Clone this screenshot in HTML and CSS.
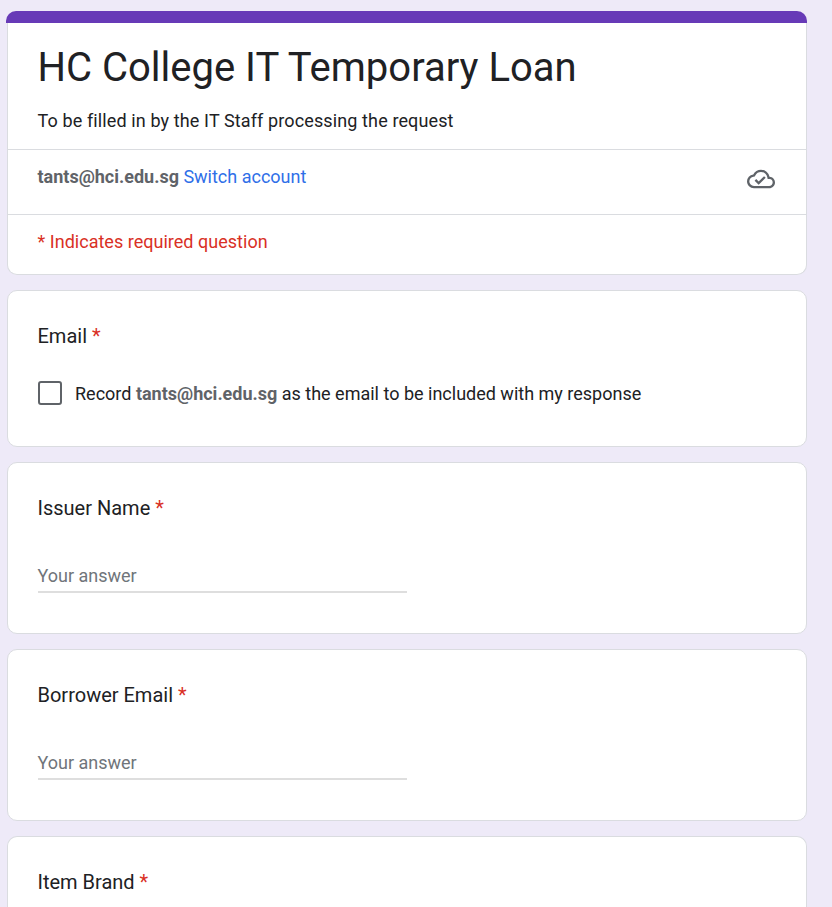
FILE: index.html
```html
<!DOCTYPE html>
<html lang="en">
<head>
<meta charset="utf-8">
<title>HC College IT Temporary Loan</title>
<link rel="stylesheet" href="styles.css">
</head>
<body>
<main class="form">
  <header class="card header">
    <div class="accent"></div>
    <div class="intro">
      <h1>HC College IT Temporary Loan</h1>
      <p class="description">To be filled in by the IT Staff processing the request</p>
    </div>
    <div class="account">
      <p><b>tants@hci.edu.sg</b> <a class="switch">Switch account</a></p>
      <svg class="cloud" viewBox="0 0 24 24" aria-hidden="true"><path d="M19.35 10.04A7.49 7.49 0 0 0 12 4C9.11 4 6.6 5.64 5.35 8.04A5.994 5.994 0 0 0 0 14c0 3.31 2.69 6 6 6h13c2.76 0 5-2.24 5-5 0-2.64-2.05-4.78-4.65-4.96zM19 18H6c-2.21 0-4-1.79-4-4 0-2.05 1.53-3.76 3.56-3.97l1.07-.11.5-.95A5.469 5.469 0 0 1 12 6c2.62 0 4.88 1.86 5.39 4.43l.3 1.5 1.53.11A2.98 2.98 0 0 1 22 15c0 1.65-1.35 3-3 3zm-9-3.82l-2.09-2.09L6.5 13.5 10 17l6.01-6.01-1.41-1.41z"/></svg>
    </div>
    <p class="required-note">* Indicates required question</p>
  </header>
  <section class="card email">
    <h2>Email <span class="star">*</span></h2>
    <label class="record"><span class="checkbox"></span><span class="record-text">Record <b>tants@hci.edu.sg</b> as the email to be included with my response</span></label>
  </section>
  <section class="card question">
    <h2>Issuer Name <span class="star">*</span></h2>
    <div class="answer">Your answer</div>
  </section>
  <section class="card question">
    <h2>Borrower Email <span class="star">*</span></h2>
    <div class="answer">Your answer</div>
  </section>
  <section class="card question last">
    <h2>Item Brand <span class="star">*</span></h2>
  </section>
</main>
</body>
</html>
```
FILE: styles.css
```css
* { box-sizing: border-box; }
body {
  margin: 0;
  background: #eeeaf8;
  color: #202124;
  font-family: Roboto, sans-serif;
  font-size: 18px;
  line-height: 26px;
}
h1, h2, p { margin: 0; font-weight: 400; }
b { font-weight: 700; color: #5f6368; }
.form {
  display: flex;
  flex-direction: column;
  gap: 15px;
  width: 800px;
  height: 907px;
  margin-left: 7px;
  padding-top: 11px;
}
.card {
  flex: none;
  background: #fff;
  border: 1px solid #dadce0;
  border-radius: 10px;
}
.header { height: 264px; border-top: 0; }
.accent {
  height: 12px;
  margin: 0 -1px 0 -2px;
  background: #673ab7;
  border-radius: 10px 10px 0 0;
}
.intro { height: 127px; padding: 17px 30px 0 29.5px; border-bottom: 1px solid #dadce0; }
h1 { font-size: 40px; line-height: 56px; white-space: nowrap; }
.description { margin-top: 12px; letter-spacing: 0.12px; }
.account {
  display: flex;
  justify-content: space-between;
  height: 65px;
  padding: 14px 31px 0 29.5px;
  border-bottom: 1px solid #dadce0;
}
.switch { color: #2f6fe8; }
.cloud { width: 28px; height: 28px; margin-top: 1px; fill: #5f6368; }
.required-note { padding: 14px 30px 0 29.5px; color: #d93025; letter-spacing: 0.02px; }
.email { height: 157px; }
.email, .question { padding: 30px 30px 0; }
.question { height: 172px; }
.last {
  flex: 1;
  height: auto;
  border-bottom: 0;
  border-radius: 10px 10px 0 0;
}
h2 { margin-left: -0.5px; font-size: 20px; line-height: 30px; }
.star { color: #d93025; }
.record { display: flex; align-items: center; gap: 13px; margin-top: 29px; }
.record-text { margin: 1px 0 -1px; }
.checkbox { width: 24px; height: 24px; border: 2px solid #5f6368; border-radius: 3px; }
.answer {
  width: 369px;
  height: 30px;
  margin-top: 40px;
  border-bottom: 2px solid #dedede;
  color: #70757a;
  text-indent: -0.5px;
}
```
